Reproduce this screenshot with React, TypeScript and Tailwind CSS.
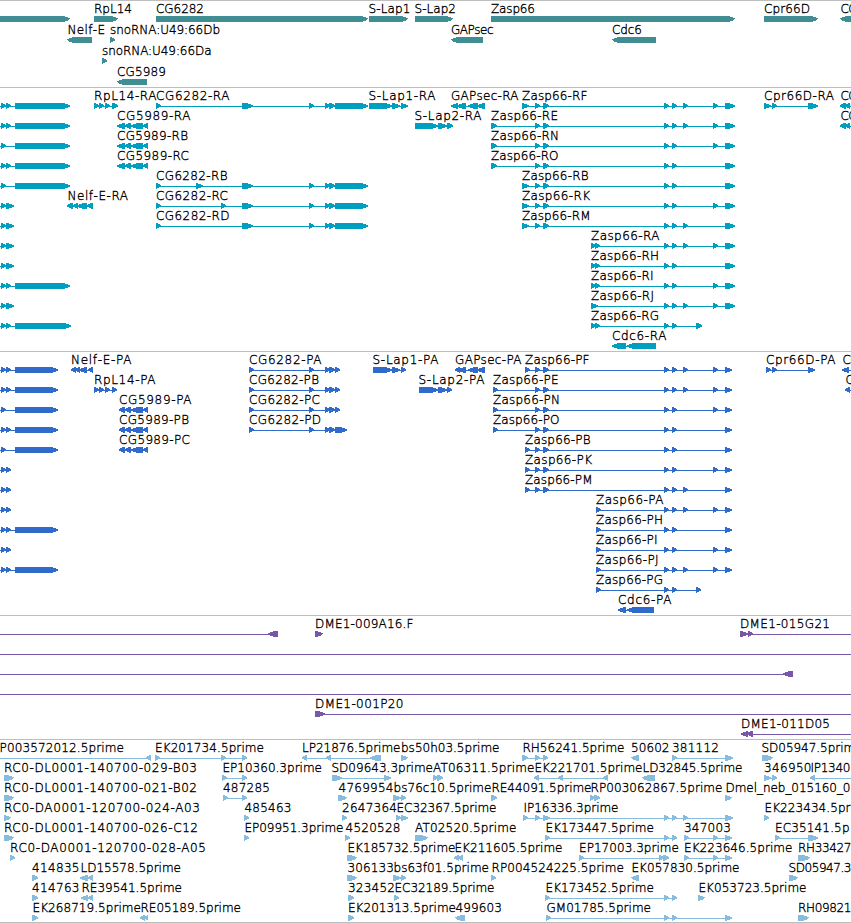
interface Feature {
  row: number;
  label?: string;
  // left and right edge of the label
  text?: [number, number];
  reverse?: boolean;
  exons: [number, number][];
  // extent of the intron line, when it runs past the exons
  span?: [number, number];
}

interface TrackProps {
  features: Feature[];
  height: number;
  rowHeight?: number;
  className: string;
}

const WIDTH = 851;

const parseExons = (exons: string): [number, number][] =>
  exons
    .split(" ")
    .filter(Boolean)
    .map((e) => e.split("-").map(Number) as [number, number]);

const fwd = (row: number, label: string, x: number, end: number, exons: string, span?: [number, number]): Feature => ({
  row, label, text: [x, end], exons: parseExons(exons), span,
});

const rev = (row: number, label: string, x: number, end: number, exons: string, span?: [number, number]): Feature => ({
  row, label, text: [x, end], exons: parseExons(exons), span, reverse: true,
});

const plain = (row: number, exons: string, span?: [number, number], reverse = false): Feature => ({
  row, exons: parseExons(exons), span, reverse,
});

const genes: Feature[] = [
  plain(0, "0-70"),
  fwd(0, "RpL14", 94.5, 131.5, "94-118"),
  fwd(0, "CG6282", 156.5, 203.5, "156-368"),
  fwd(0, "S-Lap1", 369, 410, "369-408"),
  fwd(0, "S-Lap2", 415, 455.5, "415-453"),
  fwd(0, "Zasp66", 491.5, 534.5, "491-735"),
  fwd(0, "Cpr66D", 764.5, 809.5, "764-818"),
  rev(0, "CG", 841, 857, "840-870"),
  rev(1, "Nelf-E", 68, 104.5, "67-92"),
  fwd(1, "snoRNA:U49:66Db", 110.5, 219.5, "110-115"),
  rev(1, "GAPsec", 451.5, 493, "451-483"),
  rev(1, "Cdc6", 612.5, 641.5, "612-656"),
  fwd(2, "snoRNA:U49:66Da", 102.5, 211, "102-107"),
  rev(3, "CG5989", 117.5, 165.5, "117-147"),
];

const transcripts: Feature[] = [
  plain(0, "1-6 6-11 15-70", [0, 70]),
  plain(1, "1-6 6-11 15-70", [0, 70]),
  plain(2, "1-6 15-70", [0, 70]),
  plain(3, "1-6 6-11 15-70", [0, 70]),
  plain(4, "1-6 15-70", [0, 70]),
  plain(5, "1-6 6-14", [0, 14]),
  plain(6, "1-6 6-14", [0, 14]),
  plain(7, "1-6 6-14", [0, 14]),
  plain(8, "1-6 6-14", [0, 14]),
  plain(9, "1-6 6-11 15-70", [0, 70]),
  plain(10, "1-6 6-14", [0, 14]),
  plain(11, "1-6 6-11 15-71", [0, 71]),
  fwd(0, "RpL14-RA", 94.5, 156, "94-99 99-104 105-110 112-118"),
  rev(1, "CG5989-RA", 117.5, 190, "117-125 125-131 131-143 143-148"),
  rev(2, "CG5989-RB", 117.5, 187.5, "117-125 125-131 131-143 143-148"),
  rev(3, "CG5989-RC", 117.5, 188.5, "117-125 125-131 131-143 143-148"),
  rev(5, "Nelf-E-RA", 68, 127.5, "67-73 73-78 77-87 87-93"),
  fwd(0, "CG6282-RA", 156.5, 229, "156-161 242-253 309-314 325-330 329-335 335-368"),
  fwd(4, "CG6282-RB", 156.5, 227, "156-161 196-203 242-253 309-314 325-330 329-335 335-368"),
  fwd(5, "CG6282-RC", 156.5, 227.5, "156-161 221-226 242-253 309-314 325-330 329-335 335-368"),
  fwd(6, "CG6282-RD", 156.5, 229, "156-161 242-253 309-314 325-330 329-335 335-368"),
  fwd(0, "S-Lap1-RA", 369, 435, "369-392 392-400 401-408"),
  fwd(1, "S-Lap2-RA", 415, 481, "415-438 438-447 447-453"),
  rev(0, "GAPsec-RA", 451.5, 518, "451-458 457-466 468-478 477-485"),
  fwd(0, "Zasp66-RF", 522.5, 587, "522-529 535-540 543-549 664-669 672-677 683-688 713-718 725-735"),
  fwd(1, "Zasp66-RE", 491.5, 557.5, "491-497 535-540 543-549 664-669 672-677 683-688 713-718 725-735"),
  fwd(2, "Zasp66-RN", 491.5, 558.5, "491-497 535-540 543-549 664-669 672-677 713-718 725-735"),
  fwd(3, "Zasp66-RO", 491.5, 558, "491-497 535-540 543-549 664-669 672-677 725-735"),
  fwd(4, "Zasp66-RB", 522.5, 588, "522-529 535-540 543-549 664-669 672-677 725-735"),
  fwd(5, "Zasp66-RK", 522.5, 589.5, "522-529 535-540 543-549 664-669 672-677 713-718 725-735"),
  fwd(6, "Zasp66-RM", 522.5, 590, "522-529 535-540 543-549 664-669 672-677 683-688 725-735"),
  fwd(7, "Zasp66-RA", 591.5, 659, "591-596 595-600 664-669 672-677 683-688 713-718 725-735"),
  fwd(8, "Zasp66-RH", 591.5, 658.5, "591-596 595-600 664-669 672-677 725-735"),
  fwd(9, "Zasp66-RI", 591.5, 653, "591-596 595-600 664-669 672-677 713-718 725-735"),
  fwd(10, "Zasp66-RJ", 591.5, 653.5, "591-598 664-669 672-677 683-688 713-718 725-735"),
  fwd(11, "Zasp66-RG", 591.5, 658.5, "591-596 595-600 664-669 672-677 696-702"),
  rev(12, "Cdc6-RA", 612.5, 666, "612-626 627-656"),
  fwd(0, "Cpr66D-RA", 764.5, 833.5, "764-771 772-777 808-818"),
  rev(0, "CG", 841, 857, "840-846 845-850", [840, 860]),
  rev(1, "CG", 841, 857, "840-846 845-850", [840, 860]),
];

const proteins: Feature[] = [
  plain(0, "1-6 6-11 15-58", [0, 58]),
  plain(1, "1-6 6-11 15-58", [0, 58]),
  plain(2, "1-6 15-58", [0, 58]),
  plain(3, "1-6 6-11 15-58", [0, 58]),
  plain(4, "1-6 15-58", [0, 58]),
  plain(5, "1-6 6-11", [0, 11]),
  plain(6, "1-6 6-11", [0, 11]),
  plain(7, "1-6 6-11", [0, 11]),
  plain(8, "1-6 6-11 15-58", [0, 58]),
  plain(9, "1-6 6-11", [0, 11]),
  plain(10, "1-6 6-11 15-58", [0, 58]),
  rev(0, "Nelf-E-PA", 71.5, 131, "71-76 75-80 79-87 88-93"),
  fwd(1, "RpL14-PA", 94.5, 155, "94-99 99-104 105-110 112-117"),
  rev(2, "CG5989-PA", 119.5, 191, "119-125 125-131 131-143 143-148"),
  rev(3, "CG5989-PB", 119.5, 188.5, "119-125 125-131 131-143 143-148"),
  rev(4, "CG5989-PC", 119.5, 189.5, "119-125 125-131 131-143 143-148"),
  fwd(0, "CG6282-PA", 249.5, 321, "249-254 309-314 325-330 329-335 335-340"),
  fwd(1, "CG6282-PB", 249.5, 318.5, "249-254 309-314 325-330 329-335 335-340"),
  fwd(2, "CG6282-PC", 249.5, 319.5, "249-254 309-314 325-330 329-335 335-340"),
  fwd(3, "CG6282-PD", 249.5, 320.5, "249-254 309-314 325-330 329-335 335-347"),
  fwd(0, "S-Lap1-PA", 373, 438, "373-392 392-400 401-406"),
  fwd(1, "S-Lap2-PA", 419, 484, "419-438 438-447 447-452"),
  rev(0, "GAPsec-PA", 455.5, 521, "455-460 458-466 468-478 477-485"),
  fwd(0, "Zasp66-PF", 525.5, 589, "525-530 535-540 543-549 664-669 672-677 683-688 713-718 725-732"),
  fwd(1, "Zasp66-PE", 493.5, 558, "493-498 535-540 543-549 664-669 672-677 683-688 713-718 725-732"),
  fwd(2, "Zasp66-PN", 493.5, 559.5, "493-498 535-540 543-549 664-669 672-677 713-718 725-732"),
  fwd(3, "Zasp66-PO", 493.5, 559, "493-498 535-540 543-549 664-669 672-677 725-732"),
  fwd(4, "Zasp66-PB", 525.5, 590, "525-530 535-540 543-549 664-669 672-677 725-732"),
  fwd(5, "Zasp66-PK", 525.5, 591.5, "525-530 535-540 543-549 664-669 672-677 713-718 725-732"),
  fwd(6, "Zasp66-PM", 525.5, 592, "525-530 535-540 543-549 664-669 672-677 683-688 725-732"),
  fwd(7, "Zasp66-PA", 596.5, 663, "596-601 664-669 672-677 683-688 713-718 725-732"),
  fwd(8, "Zasp66-PH", 596.5, 662.5, "596-601 664-669 672-677 725-732"),
  fwd(9, "Zasp66-PI", 596.5, 657, "596-601 664-669 672-677 713-718 725-732"),
  fwd(10, "Zasp66-PJ", 596.5, 658, "596-601 664-669 672-677 683-688 713-718 725-732"),
  fwd(11, "Zasp66-PG", 596.5, 662.5, "596-601 664-669 672-677 696-701"),
  rev(12, "Cdc6-PA", 618.5, 671, "618-626 627-654"),
  fwd(0, "Cpr66D-PA", 766.5, 835, "766-771 772-777 808-815"),
  rev(0, "CG", 843, 859, "842-849", [842, 860]),
  rev(1, "CG", 846, 862, "845-850", [845, 860]),
];

const bacs: Feature[] = [
  plain(0, "268-278", [0, 278], true),
  fwd(0, "DME1-009A16.F", 315.5, 413, "315-323"),
  fwd(0, "DME1-015G21", 740.5, 829.5, "740-748 748-753", [740, 851]),
  plain(1, "", [0, 851]),
  plain(2, "783-793", [0, 793], true),
  plain(3, "", [0, 851]),
  fwd(4, "DME1-001P20", 315.5, 403, "315-325", [315, 851]),
  rev(5, "DME1-011D05", 741.5, 829.5, "741-748 747-753", [741, 851]),
];

const ests: Feature[] = [
  rev(0, "P003572012.5prime", 0, 123.5, "146-151", [0, 151]),
  fwd(0, "EK201734.5prime", 155.5, 263.5, "155-160 221-226 242-247"),
  rev(0, "LP21876.5prime", 302.5, 400, "302-307 326-331 370-381"),
  fwd(0, "bs50h03.5prime", 401.5, 499, "401-408"),
  fwd(0, "RH56241.5prime", 523, 624, "522-528 535-540 543-548"),
  rev(0, "50602", 631.5, 669, "631-639"),
  fwd(0, "381112", 672.5, 718.5, "672-677 725-733"),
  fwd(0, "SD05947.5prime", 762, 862, "762-773"),
  fwd(1, "RC0-DL0001-140700-029-B03", 4.5, 196.5, "4-14"),
  fwd(1, "EP10360.3prime", 223, 321.5, "222-227 242-247"),
  fwd(1, "SD09643.3prime", 332, 432.5, "332-342 384-391"),
  fwd(1, "AT06311.5prime", 433.5, 534, "433-438 437-443"),
  rev(1, "EK221701.5prime", 535, 642, "534-539 558-563 603-608"),
  rev(1, "LD32845.5prime", 643, 742, "642-655"),
  fwd(1, "346950", 764.5, 811, "764-771 772-777"),
  rev(1, "IP1340", 811, 850, "810-815", [810, 851]),
  fwd(2, "RC0-DL0001-140700-021-B02", 4.5, 196.5, "4-14"),
  fwd(2, "487285", 223.5, 269.5, "223-228 242-247"),
  fwd(2, "4769954", 339, 393, "338-347"),
  fwd(2, "bs76c10.5prime", 394, 491, "393-401 401-406"),
  fwd(2, "RE44091.5prime", 492, 591, "491-497"),
  fwd(2, "RP003062867.5prime", 591, 722, "590-595 594-600"),
  fwd(2, "Dmel_neb_015160_0", 726, 850, "725-732"),
  fwd(3, "RC0-DA0001-120700-024-A03", 4.5, 199.5, "4-11"),
  fwd(3, "485463", 245, 291, "244-249"),
  fwd(3, "2647364", 342.5, 396.5, "342-347"),
  fwd(3, "EC32367.5prime", 397, 496, "396-401 401-408"),
  fwd(3, "IP16336.3prime", 524, 618, "523-528 535-540 543-550 664-669 672-677 683-688 725-733"),
  fwd(3, "EK223434.5pr", 765, 850, "764-769"),
  fwd(4, "RC0-DL0001-140700-026-C12", 4.5, 197.5, "4-14"),
  fwd(4, "EP09951.3prime", 245, 343, "244-249"),
  fwd(4, "4520528", 346, 400, "345-350"),
  fwd(4, "AT02520.5prime", 415.5, 516, "415-428"),
  fwd(4, "EK173447.5prime", 546, 653.5, "545-550 664-669 672-677"),
  fwd(4, "347003", 684.5, 730.5, "684-689 713-718 725-732"),
  fwd(4, "EC35141.5p", 775.5, 849, "775-780 808-818"),
  fwd(5, "RC0-DA0001-120700-028-A05", 10.5, 205.5, "10-15"),
  fwd(5, "EK185732.5prime", 348, 455, "347-357"),
  rev(5, "EK211605.5prime", 455, 562, "454-459 458-463"),
  fwd(5, "EP17003.3prime", 579.5, 678.5, "579-584 659-664 663-669"),
  fwd(5, "EK223646.5prime", 684.5, 792, "684-689 713-718 725-732"),
  fwd(5, "RH33427", 798.5, 851, "798-810"),
  fwd(6, "414835", 32.5, 79, "32-38"),
  rev(6, "LD15578.5prime", 81, 180.5, "80-88 88-93"),
  fwd(6, "306133", 348, 393.5, "347-357"),
  fwd(6, "bs63f01.5prime", 394, 488.5, "393-401 401-406"),
  fwd(6, "RP004524225.5prime", 492, 623.5, "491-496"),
  rev(6, "EK057830.5prime", 632, 739, "631-639"),
  fwd(6, "SD05947.3", 789, 851, "789-798"),
  fwd(7, "414763", 32.5, 79, "32-38"),
  rev(7, "RE39541.5prime", 82, 181.5, "81-88 88-93"),
  fwd(7, "323452", 348.5, 394.5, "348-354"),
  fwd(7, "EC32189.5prime", 395, 494, "394-399"),
  fwd(7, "EK173452.5prime", 546, 653.5, "545-550 664-669 672-677"),
  fwd(7, "EK053723.5prime", 699, 806, "698-705"),
  fwd(8, "EK268719.5prime", 33, 140.5, "32-38"),
  rev(8, "RE05189.5prime", 141, 240.5, "140-145 144-148"),
  fwd(8, "EK201313.5prime", 348.5, 455.5, "348-354"),
  rev(8, "499603", 456, 501.5, "455-465"),
  fwd(8, "GM01785.5prime", 547, 650.5, "546-551 664-669 672-677 725-732"),
  fwd(8, "RH09821", 798.5, 851, "798-809"),
];

// how far each of the six pixel rows stays short of the tip
const SMALL_HEAD = [3, 1, 0, 0, 2, 4];
const LARGE_HEAD = [5, 2, 0, 1, 2, 5];

const arrowPoints = (a: number, b: number, y: number, reverse?: boolean) => {
  const tip = reverse ? a : b + 0.5;
  const back = reverse ? b : a;
  const insets = b - a > 6 ? LARGE_HEAD : SMALL_HEAD;
  const edge = insets.flatMap((inset, i) => {
    const x = reverse ? tip + inset : Math.floor(tip) - inset;
    return [`${x},${y + i}`, `${x},${y + i + 1}`];
  });
  return [`${back},${y}`, ...edge, `${back},${y + 6}`].join(" ");
};

function FeatureGlyph({ feature, rowHeight }: { feature: Feature; rowHeight: number }) {
  const { row, label, text, reverse, exons, span } = feature;
  const y = 15 + row * rowHeight;
  const from = span ? span[0] : exons[0][0];
  const to = span ? span[1] : exons[exons.length - 1][1];

  return (
    <g>
      {(exons.length > 1 || span) && <rect x={from} y={y + 3} width={to - from} height={1} />}
      {exons.map(([a, b]) => (
        <polygon key={a} points={arrowPoints(a, b, y, reverse)} />
      ))}
      {label && text && (
        <text
          x={text[0] - 0.5}
          y={y - 3}
          textLength={text[1] - text[0] + 1}
          lengthAdjust="spacing"
          className="fill-black stroke-black stroke-[0.35px]"
        >
          {label}
        </text>
      )}
    </g>
  );
}

function Track({ features, height, rowHeight = 20, className }: TrackProps) {
  return (
    <section className="border-t border-[#bebebe]">
      <svg
        width={WIDTH}
        height={height - 1}
        shapeRendering="crispEdges"
        className={`block overflow-hidden ${className}`}
      >
        {features.map((feature, i) => (
          <FeatureGlyph key={i} feature={feature} rowHeight={rowHeight} />
        ))}
      </svg>
    </section>
  );
}

export default function App() {
  return (
    <main className="w-[851px] h-[923px] overflow-hidden bg-white border-b border-[#bebebe] text-[12px] font-extralight font-['DejaVu_Sans',sans-serif]">
      <Track features={genes} height={87} rowHeight={21} className="fill-[#408e93]" />
      <Track features={transcripts} height={264} className="fill-[#009ebf]" />
      <Track features={proteins} height={264} className="fill-[#306bcb]" />
      <Track features={bacs} height={124} className="fill-[#7757a8]" />
      <Track features={ests} height={183} className="fill-[#88bcdf]" />
    </main>
  );
}
